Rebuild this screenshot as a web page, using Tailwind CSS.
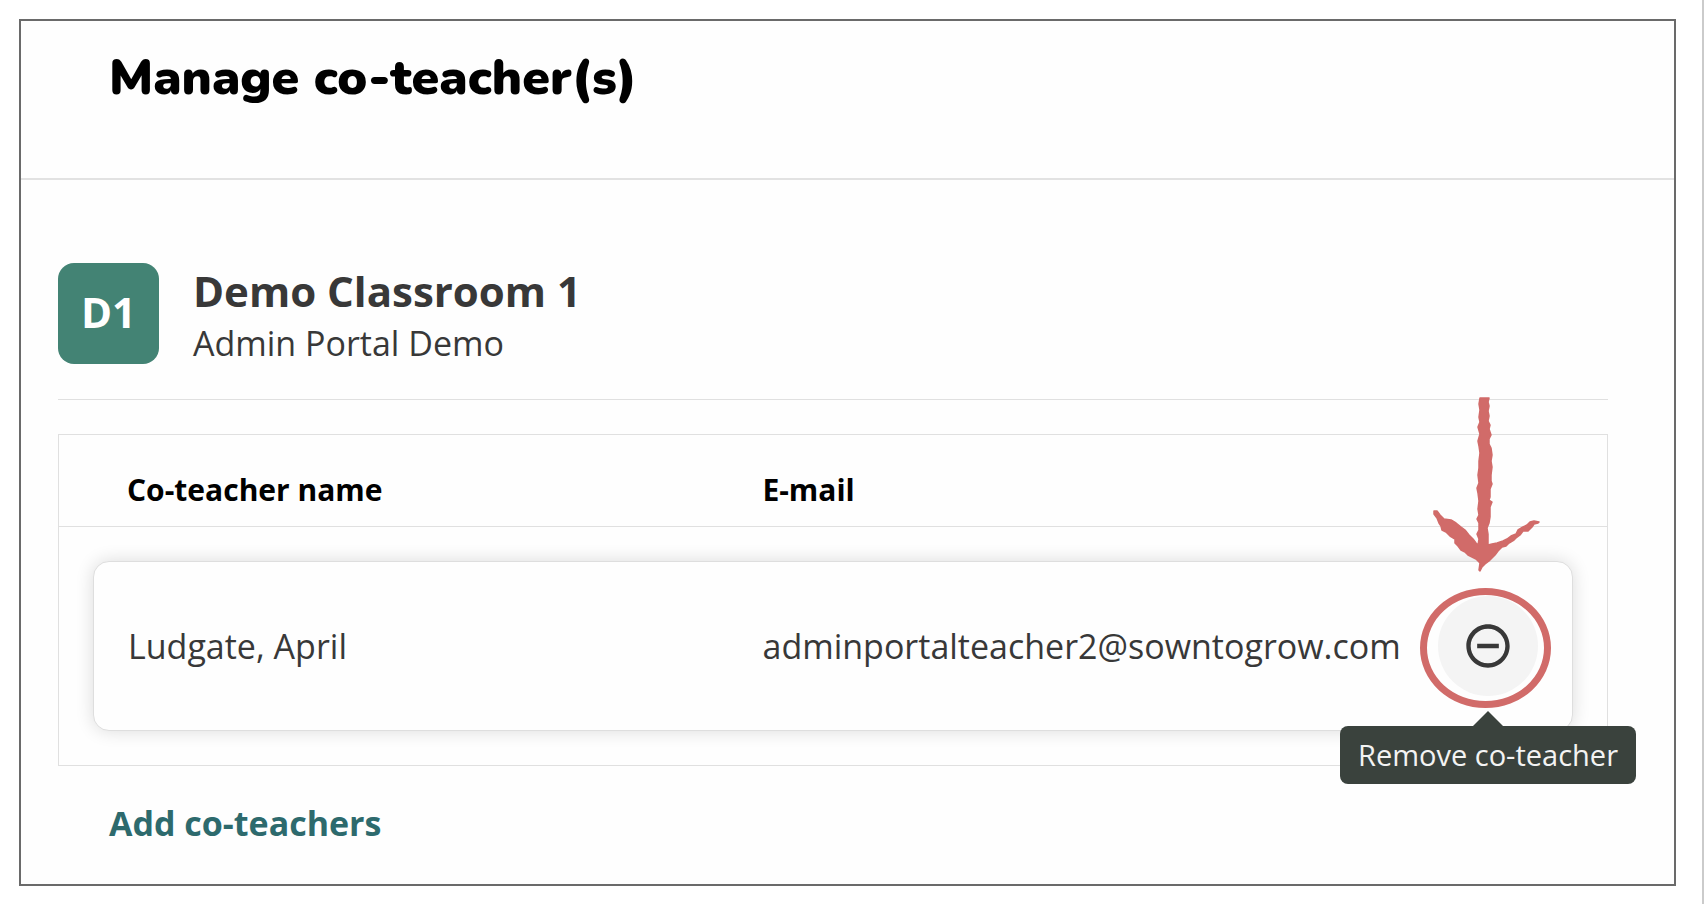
<!DOCTYPE html>
<html lang="en">
  <head>
    <meta charset="UTF-8" />
    <meta name="viewport" content="width=device-width, initial-scale=1" />
    <title>Manage co-teacher(s)</title>
    <script src="https://cdn.jsdelivr.net/npm/@tailwindcss/browser@4"></script>
  </head>
  <body
    class="min-h-screen border-r-2 border-[#cbcbcb] bg-white p-[19px] pr-[26px] pb-[18px] font-['Open_Sans',sans-serif] text-[#383838] flex flex-col"
  >
    <main class="flex-1 border-2 border-[#6a6a6a] bg-[#fefefe]">
      <header class="border-b-2 border-[#e2e2e2] px-[88px] pt-[23px] pb-[66px]">
        <h1
          class="font-[Nunito,'Open_Sans',sans-serif] text-[50px] leading-[68px] font-black text-black"
        >
          Manage co-teacher(s)
        </h1>
      </header>

      <section class="pt-[83px] pr-[66px] pl-[37px]">
        <div
          class="flex items-start gap-[34px] border-b border-[#e0e0e0] pb-8"
        >
          <div
            class="flex size-[101px] shrink-0 items-center justify-center rounded-2xl bg-[#438374] pb-1 text-[42px] font-bold text-white"
          >
            D1
          </div>
          <div>
            <h2 class="text-[42px] leading-[56px] font-bold">
              Demo Classroom 1
            </h2>
            <p class="text-[34px] leading-[48px]">Admin Portal Demo</p>
          </div>
        </div>

        <table class="mt-[34px] block border border-[#e0e0e0]">
          <thead class="block border-b border-[#e0e0e0]">
            <tr
              class="grid grid-cols-[45%_1fr_100px] px-[68px] pt-[34px] pb-4 text-left text-[30px] leading-[41px] text-black"
            >
              <th scope="col" class="font-bold">Co-teacher name</th>
              <th scope="col" class="font-bold">E-mail</th>
              <td></td>
            </tr>
          </thead>
          <tbody class="block p-[34px]">
            <tr
              class="grid grid-cols-[45%_1fr_100px] items-center rounded-2xl border border-[#dedede] bg-[#fefefe] p-[34px] text-[34px] leading-[50px] shadow-[0_0_18px_rgba(0,0,0,0.14)]"
            >
              <td>Ludgate, April</td>
              <td>adminportalteacher2@sowntogrow.com</td>
              <td class="relative">
                <button
                  type="button"
                  aria-label="Remove co-teacher"
                  aria-describedby="remove-tooltip"
                  class="flex size-[100px] items-center justify-center rounded-full bg-[#f4f4f4]"
                >
                  <svg class="size-[52px]" viewBox="0 0 24 24" fill="#383838">
                    <path
                      d="M7 11v2h10v-2H7zm5-9C6.48 2 2 6.48 2 12s4.480 10 10 10 10-4.480 10-10S17.520 2 12 2zm0 18c-4.410 0-8-3.590-8-8s3.590-8 8-8 8 3.590 8 8-3.590 8-8 8z"
                    />
                  </svg>
                </button>
                <!-- hand-drawn callout -->
                <span
                  class="pointer-events-none absolute -top-2 -left-[18px] h-[120px] w-[131px] rounded-[50%] border-[7px] border-[#d16b69]"
                ></span>
                <svg
                  class="pointer-events-none absolute -left-[39px] bottom-[119px] h-[180px] w-[180px]"
                  viewBox="0 0 180 180"
                  fill="#d16b69"
                  stroke="#d16b69"
                  stroke-width="1.5"
                  stroke-linejoin="round"
                >
                  <path
                    d="M81 1H90L89 5 90 9 89 14 90 19 89 24 91 28 90 32 92 38 90 42 90 47 92 51 93 58 92 64 93 70 92 78 92 84 93 87 91 92 91 100 90 103 93 105 91 110 91 120 90 126 88 131 89 137 89 148 93 147 98 146 104 144 108 142 112 139 117 137 119 133 124 130 128 128 131 125 135 124 140 125 139 126 135 127 133 130 129 134 124 134 121 138 117 141 115 143 110 146 107 149 103 150 99 154 96 158 93 161 90 164 86 167 83 170 81 174 80 173 81 166 77 162 73 160 69 158 66 155 62 153 59 149 56 146 56 142 51 139 47 135 43 133 42 129 40 126 38 121 35 117 35 114 38 114 41 118 45 122 52 123 57 126 62 130 66 133 70 138 74 142 77 146 79 148 80 142 78 137 80 133 80 126 78 122 80 118 79 112 80 104 79 96 78 91 80 86 79 78 80 71 80 64 81 56 80 49 79 44 81 37 79 30 81 25 80 20 81 13 80 7z"
                  />
                </svg>
                <div
                  id="remove-tooltip"
                  role="tooltip"
                  class="absolute top-[130px] left-1/2 -translate-x-1/2 rounded-lg bg-[#3a423d] px-[18px] py-[9px] text-[29px] leading-[40px] whitespace-nowrap text-[#f3f3f3]"
                >
                  <svg
                    class="absolute bottom-full left-1/2 h-[15px] w-[30px] -translate-x-1/2"
                    viewBox="0 0 30 15"
                    fill="#3a423d"
                  >
                    <path d="M15 0 30 15H0z" />
                  </svg>
                  Remove co-teacher
                </div>
              </td>
            </tr>
          </tbody>
        </table>

        <a
          href="#add"
          class="mt-8 ml-[51px] inline-block text-[34px] leading-[50px] font-bold text-[#2d6a6d]"
          >Add co-teachers</a
        >
      </section>
    </main>
  </body>
</html>
